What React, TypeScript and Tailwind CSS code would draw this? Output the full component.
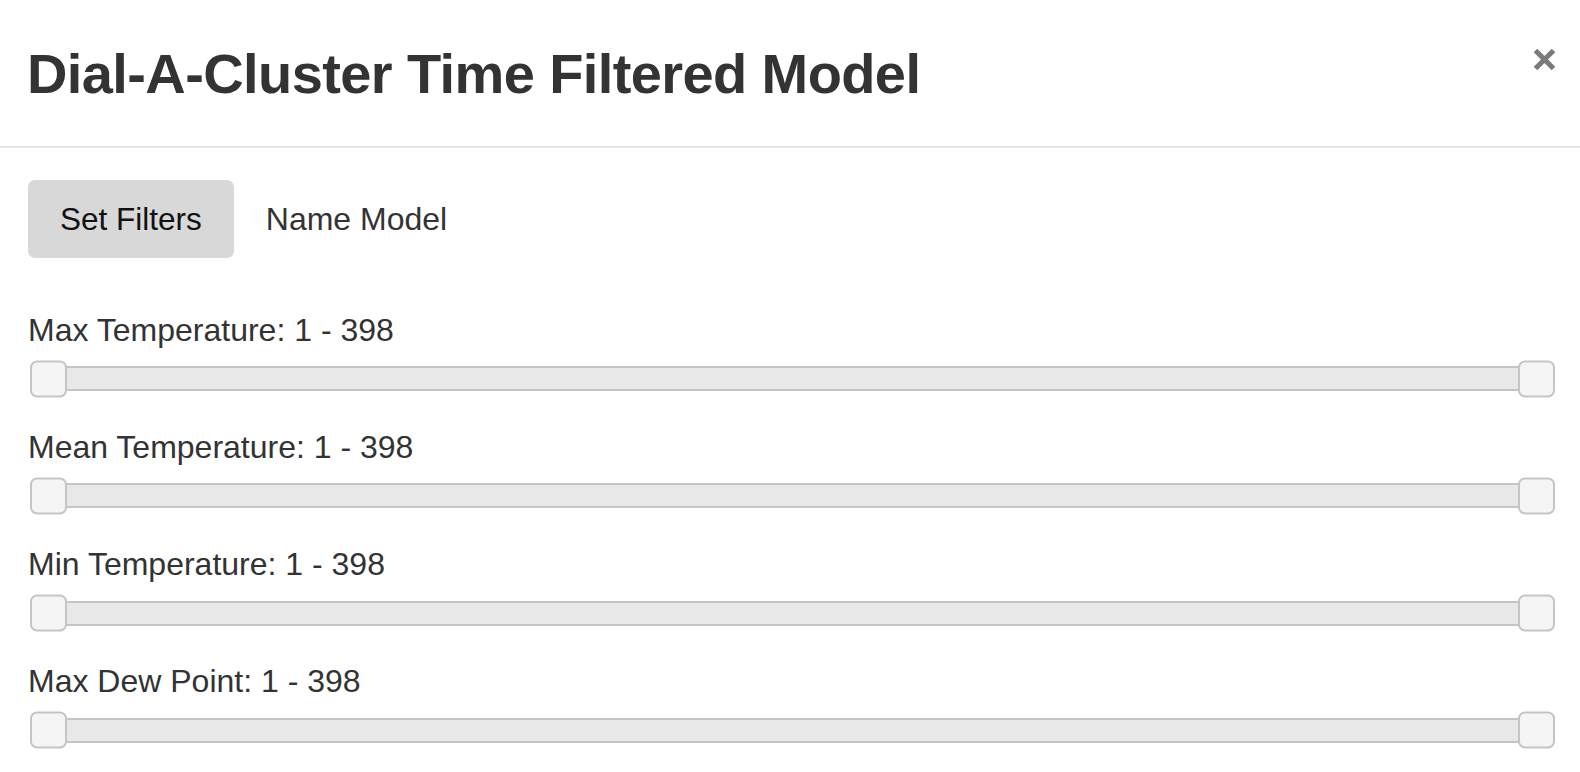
import React from "react";

const sliders = [
  "Max Temperature: 1 - 398",
  "Mean Temperature: 1 - 398",
  "Min Temperature: 1 - 398",
  "Max Dew Point: 1 - 398",
];

function RangeSlider({ label }: { label: string }) {
  return (
    <div className="mb-[33.7px]">
      <div className="text-[32px] leading-[45px] text-[#333333]">{label}</div>
      <div className="relative mt-[13.4px] ml-[20.5px] mr-[15.5px] h-[25px] rounded-[3px] border-2 border-[#c5c5c5] bg-[#e8e8e8]">
        <span className="absolute left-[-20.5px] top-1/2 h-[37px] w-[37px] -translate-y-1/2 rounded-[7px] border-2 border-[#c5c5c5] bg-[#f5f5f5]" />
        <span className="absolute right-[-20.5px] top-1/2 h-[37px] w-[37px] -translate-y-1/2 rounded-[7px] border-2 border-[#c5c5c5] bg-[#f5f5f5]" />
      </div>
    </div>
  );
}

export default function App() {
  return (
    <div className="h-[772px] w-[1580px] overflow-hidden bg-white font-['Liberation_Sans',Arial,sans-serif]">
      <div className="flex h-[148px] items-start justify-between border-b-2 border-[#e5e5e5] pl-[27px] pr-[24px] pt-[43px]">
        <h1 className="text-[56px] font-bold leading-[61.6px] tracking-[-0.6px] text-[#333333]">
          Dial-A-Cluster Time Filtered Model
        </h1>
        <button className="mt-[5px] h-[23px] w-[23px] text-[#7a7a7a]" aria-label="Close">
          <svg viewBox="0 0 23 23" width="23" height="23">
            <path d="M2.5 2.5 L20.5 20.5 M20.5 2.5 L2.5 20.5" stroke="currentColor" strokeWidth="5" strokeLinecap="butt" />
          </svg>
        </button>
      </div>
      <div className="px-[28px] pt-[32px]">
        <div className="flex">
          <div className="flex h-[78px] items-center rounded-[7px] bg-[#d8d8d8] px-[32px] text-[31.5px] leading-[45px] text-[#111111]">
            Set Filters
          </div>
          <div className="flex h-[78px] items-center px-[32px] text-[32px] leading-[45px] text-[#333333]">
            Name Model
          </div>
        </div>
        <div className="mt-[50px]">
          {sliders.map((s) => (
            <RangeSlider key={s} label={s} />
          ))}
        </div>
      </div>
    </div>
  );
}
